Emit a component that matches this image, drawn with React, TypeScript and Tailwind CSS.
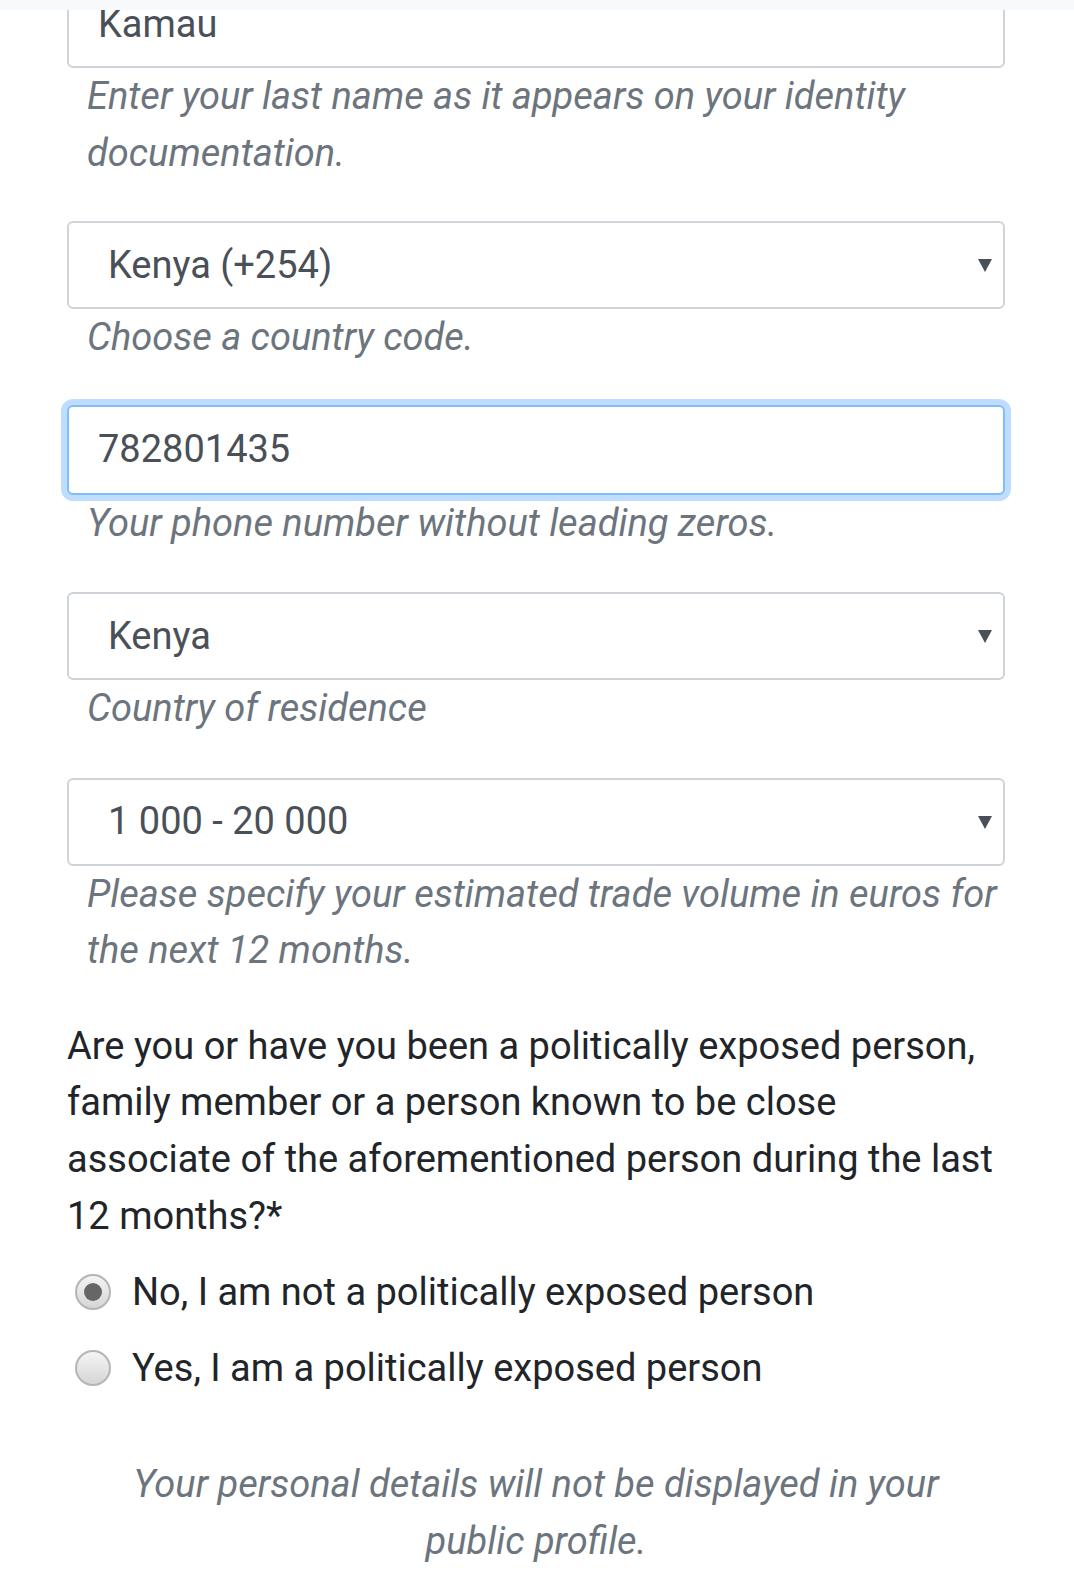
import React, { FC } from "react";

const Helper: FC<{ children: React.ReactNode }> = ({ children }) => (
  <p className="pl-[20px] pr-[4px] text-[38px] leading-[56.5px] italic text-[#6c757d]">{children}</p>
);

const Caret: FC = () => (
  <svg width="16" height="16" viewBox="0 0 16 16" className="absolute right-[10px] top-1/2 -translate-y-1/2">
    <path d="M1 2 L15 2 L8 15 Z" fill="#495057" />
  </svg>
);

const SelectBox: FC<{ value: string }> = ({ value }) => (
  <div className="relative h-[88px] rounded-[6px] border-2 border-[#ced4da] bg-white flex items-center pl-[39px] text-[38px] text-[#495057]">
    {value}
    <Caret />
  </div>
);

const Radio: FC<{ checked?: boolean; label: string }> = ({ checked, label }) => (
  <div className="flex items-center h-[76px]">
    <span className="ml-[8px] w-[36px] h-[36px] rounded-full border-2 border-[#b5b5b5] bg-gradient-to-b from-[#f4f4f4] to-[#d6d6d6] flex items-center justify-center">
      {checked && <span className="w-[18px] h-[18px] rounded-full bg-[#666666]" />}
    </span>
    <span className="ml-[21px] text-[38px] text-[#212529]">{label}</span>
  </div>
);

const App: FC = () => {
  return (
    <div className="relative w-[1074px] h-[1572px] overflow-hidden bg-white" style={{ fontFamily: "Roboto, 'Noto Sans', sans-serif" }}>
      {/* top bar overlapping the first field */}
      <div className="absolute top-0 left-0 right-0 h-[10px] bg-[#f8f9fa] z-10" />

      <div className="ml-[67px] mr-[69px] -mt-[20px]">
        {/* last name */}
        <div className="h-[88px] rounded-[6px] border-2 border-[#ced4da] bg-white flex items-center pl-[29px] text-[38px] text-[#495057]">
          Kamau
        </div>
        <Helper>
          Enter your last name as it appears on your identity
          <br />
          documentation.
        </Helper>

        {/* country code */}
        <div className="mt-[40px]">
          <SelectBox value="Kenya (+254)" />
          <Helper>Choose a country code.</Helper>
        </div>

        {/* phone */}
        <div className="mt-[39px]">
          <div className="h-[90px] rounded-[6px] border-2 border-[#80bdff] bg-white flex items-center pl-[29px] text-[38px] text-[#495057] shadow-[0_0_0_6px_rgba(0,123,255,0.25)]">
            782801435
          </div>
          <Helper>Your phone number without leading zeros.</Helper>
        </div>

        {/* residence */}
        <div className="mt-[41px]">
          <SelectBox value="Kenya" />
          <Helper>Country of residence</Helper>
        </div>

        {/* trade volume */}
        <div className="mt-[41px]">
          <SelectBox value="1 000 - 20 000" />
          <Helper>
            Please specify your estimated trade volume in euros for
            <br />
            the next 12 months.
          </Helper>
        </div>

        {/* PEP question */}
        <p className="mt-[39px] text-[38px] leading-[56.7px] text-[#212529]">
          Are you or have you been a politically exposed person,
          <br />
          family member or a person known to be close
          <br />
          associate of the aforementioned person during the last
          <br />
          12 months?*
        </p>

        <div className="mt-[10px]">
          <Radio checked label="No, I am not a politically exposed person" />
          <Radio label="Yes, I am a politically exposed person" />
        </div>

        <p className="mt-[50px] text-center text-[38px] leading-[57px] italic text-[#6c757d]">
          Your personal details will not be displayed in your
          <br />
          public profile.
        </p>
      </div>
    </div>
  );
};

export default App;
